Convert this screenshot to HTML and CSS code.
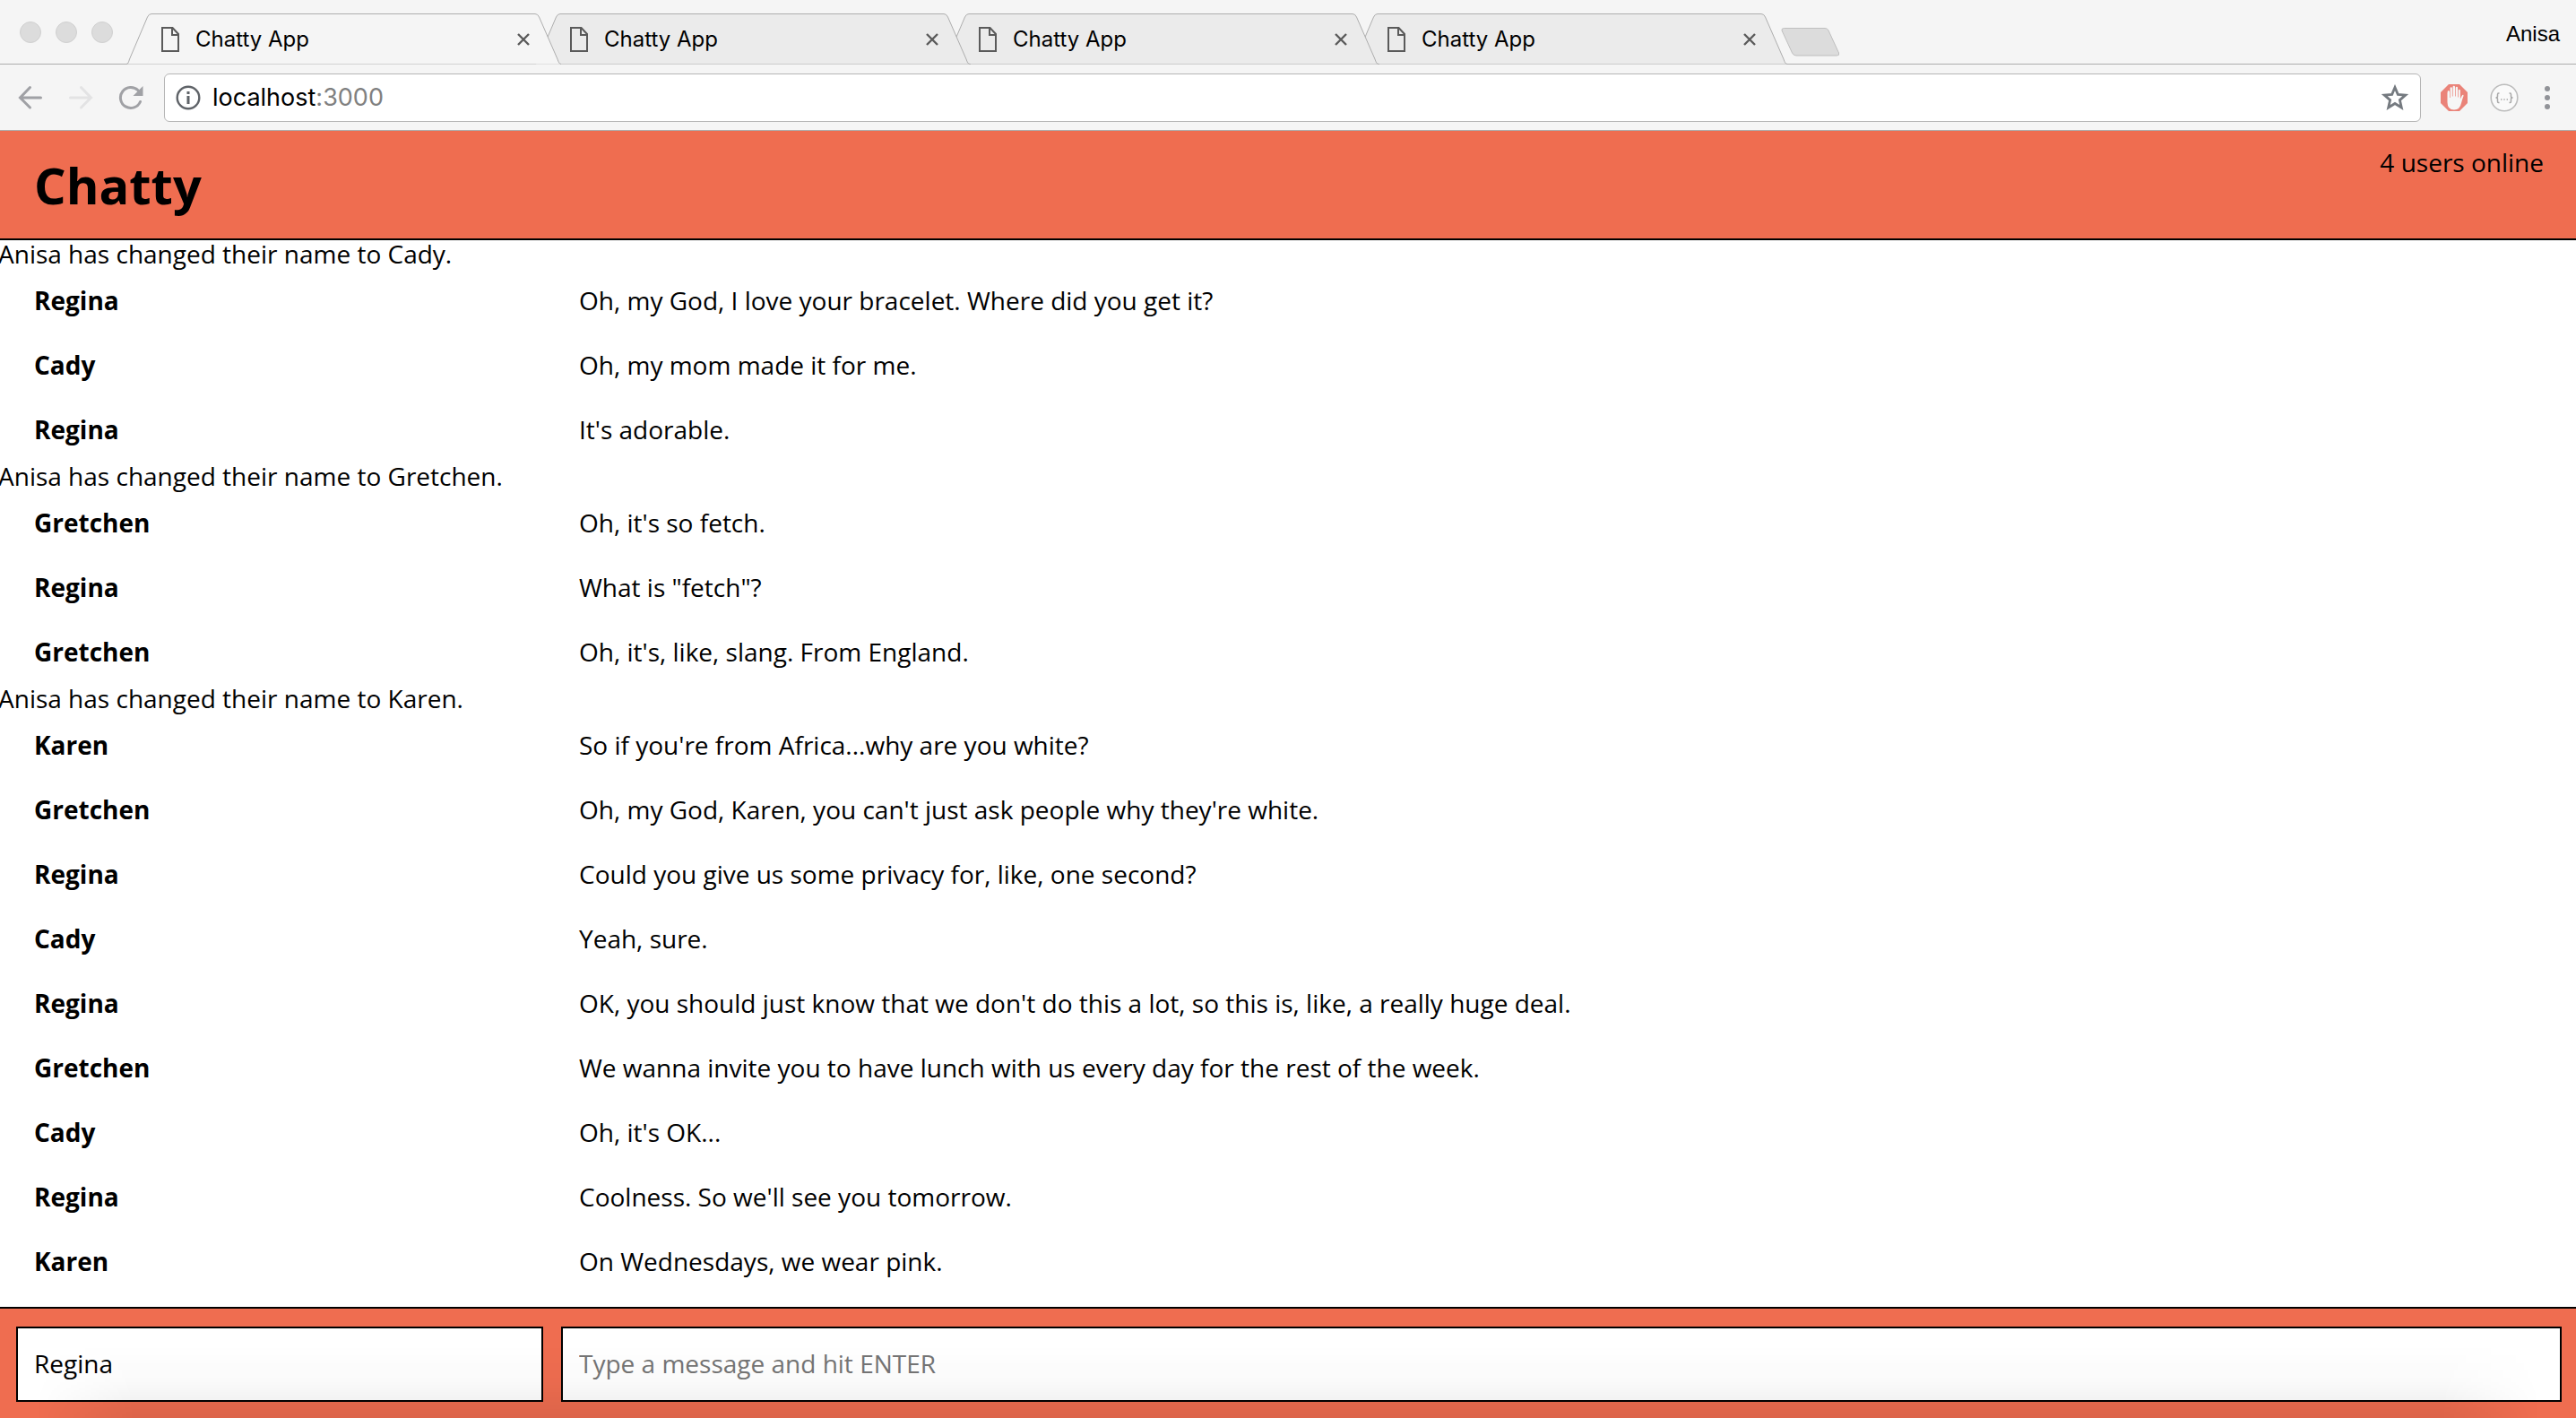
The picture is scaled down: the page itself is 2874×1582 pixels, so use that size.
FILE: index.html
```html
<!DOCTYPE html>
<html lang="en">
<head>
<meta charset="utf-8">
<title>Chatty App</title>
<link rel="stylesheet" href="styles.css">
</head>
<body>
<svg class="defs" aria-hidden="true">
  <symbol id="page" viewBox="0 0 20 28"><path d="M1 1H12.500L19 8V27H1Z M12 1V9H19" fill="none" stroke="#5a5a5a" stroke-width="2"/></symbol>
  <symbol id="close" viewBox="0 0 14 14"><path d="M1 1L13 13M13 1L1 13" fill="none" stroke="#5a5a5a" stroke-width="2.400"/></symbol>
  <symbol id="tab" viewBox="0 0 486 57"><path d="M0 56.500C2 56.500 2.500 54 3.500 51L23.500 4Q25 .5 28 .5H456Q459 .5 460.500 4L481 51C482 54 483 56.500 485 56.500" stroke="#adadad"/></symbol>
</svg>

<div class="browser">
  <div class="tab-strip">
    <div class="window-controls">
      <button class="dot" aria-label="Close window"></button>
      <button class="dot" aria-label="Minimize window"></button>
      <button class="dot" aria-label="Zoom window"></button>
    </div>
    <div class="tabs">
      <div class="tab tab-active"><svg class="tab-shape"><use href="#tab"/></svg><svg class="tab-icon"><use href="#page"/></svg><span class="tab-title">Chatty App</span><button class="tab-close" aria-label="Close tab"><svg><use href="#close"/></svg></button></div>
      <div class="tab"><svg class="tab-shape"><use href="#tab"/></svg><svg class="tab-icon"><use href="#page"/></svg><span class="tab-title">Chatty App</span><button class="tab-close" aria-label="Close tab"><svg><use href="#close"/></svg></button></div>
      <div class="tab"><svg class="tab-shape"><use href="#tab"/></svg><svg class="tab-icon"><use href="#page"/></svg><span class="tab-title">Chatty App</span><button class="tab-close" aria-label="Close tab"><svg><use href="#close"/></svg></button></div>
      <div class="tab"><svg class="tab-shape"><use href="#tab"/></svg><svg class="tab-icon"><use href="#page"/></svg><span class="tab-title">Chatty App</span><button class="tab-close" aria-label="Close tab"><svg><use href="#close"/></svg></button></div>
    </div>
    <button class="new-tab" aria-label="New tab"><svg width="66" height="32" viewBox="0 0 66 32"><path d="M3.500 .5H49Q52 .5 53 3L64.500 28Q65.500 31 62.500 31H17Q14 31 12.500 28L1 3Q.5 .5 3.500 .5Z" fill="#dcdcdc" stroke="#bfbfbf"/></svg></button>
    <span class="profile">Anisa</span>
  </div>

  <div class="toolbar">
    <div class="nav">
      <button aria-label="Back"><svg width="28" height="28" viewBox="0 0 28 28"><path d="M25.500 14H3M13.500 2.500L2.500 14L13.500 25" fill="none" stroke="#a0a1a5" stroke-width="3" stroke-linecap="round"/></svg></button>
      <button aria-label="Forward"><svg width="28" height="28" viewBox="0 0 28 28"><path d="M2.500 14H25M14.500 2.500L25.500 14L14.500 25" fill="none" stroke="#e3e3e4" stroke-width="3" stroke-linecap="round"/></svg></button>
      <button aria-label="Reload"><svg width="28" height="28" viewBox="0 0 28 28"><path d="M24.500 18.500A11.500 11.500 0 1 1 22 5.800" fill="none" stroke="#a0a1a5" stroke-width="3" stroke-linecap="round"/><path d="M27.500 1V12H16.500Z" fill="#a0a1a5"/></svg></button>
    </div>
    <div class="omnibox">
      <svg width="28" height="28" viewBox="0 0 28 28"><circle cx="14" cy="14" r="12.300" fill="none" stroke="#5f6368" stroke-width="2.400"/><path d="M12.500 7H15.500V10H12.500ZM12.500 12H15.500V21H12.500Z" fill="#5f6368"/></svg>
      <div class="url" role="textbox" contenteditable="true" spellcheck="false" aria-label="Address">localhost<span class="port">:3000</span></div>
      <button aria-label="Bookmark"><svg width="32" height="30" viewBox="0 0 32 30"><path d="M16 3.500L19.300 11.300L27.800 12L21.400 17.600L23.300 26L16 21.500L8.700 26L10.600 17.600L4.200 12L12.700 11.300Z" fill="none" stroke="#757a80" stroke-width="2.800"/></svg></button>
    </div>
    <div class="extensions">
      <button aria-label="Ad blocker"><svg width="32" height="32" viewBox="0 0 32 32"><path d="M10 1H22L31 10V22L22 31H10L1 22V10Z" fill="#ea8379"/><path d="M8.500 11Q8.500 8 9.700 8T11 9.500V16H11.600V5.500Q11.600 4.200 12.700 4.200T13.900 5.500V14.500H14.600V4Q14.600 2.800 15.800 2.800T17 4V14.500H17.700V5Q17.700 3.800 18.900 3.800T20 5V15.500H20.700V8Q20.700 6.800 21.700 6.800T22.900 8V17.500Q24 14.500 25.200 13Q26.700 12 26.500 14Q25 18 24 22Q22.500 29.500 16 29.500Q8.500 29.500 8.500 21Z" fill="#f6f6f6"/></svg></button>
      <button aria-label="JSON viewer"><svg width="32" height="32" viewBox="0 0 32 32"><circle cx="16" cy="16" r="14.800" fill="#fafafa" stroke="#bcbcbc" stroke-width="1.600"/><path d="M10.500 11H9.500Q8.500 11 8.500 12.500V14.500Q8.500 16 6.500 16Q8.500 16 8.500 17.500V20Q8.500 21.500 9.500 21.500H10.500M21.500 11H22.500Q23.500 11 23.500 12.500V14.500Q23.500 16 25.500 16Q23.500 16 23.500 17.500V20Q23.500 21.500 22.500 21.500H21.500" fill="none" stroke="#a8a8a8" stroke-width="1.500"/><path d="M12 17.300H13.400V18.700H12ZM15.300 17.300H16.700V18.700H15.300ZM18.600 17.300H20V18.700H18.600Z" fill="#a8a8a8"/></svg></button>
      <button aria-label="Menu"><svg width="32" height="32" viewBox="0 0 32 32"><g fill="#919398"><circle cx="16" cy="6" r="3"/><circle cx="16" cy="16" r="3"/><circle cx="16" cy="26" r="3"/></g></svg></button>
    </div>
  </div>
</div>

<header class="navbar">
  <h1>Chatty</h1>
  <p>4 users online</p>
</header>

<main class="messages">
  <p class="notice">Anisa has changed their name to Cady.</p>
  <div class="message"><b>Regina</b><span>Oh, my God, I love your bracelet. Where did you get it?</span></div>
  <div class="message"><b>Cady</b><span>Oh, my mom made it for me.</span></div>
  <div class="message"><b>Regina</b><span>It's adorable.</span></div>
  <p class="notice">Anisa has changed their name to Gretchen.</p>
  <div class="message"><b>Gretchen</b><span>Oh, it's so fetch.</span></div>
  <div class="message"><b>Regina</b><span>What is "fetch"?</span></div>
  <div class="message"><b>Gretchen</b><span>Oh, it's, like, slang. From England.</span></div>
  <p class="notice">Anisa has changed their name to Karen.</p>
  <div class="message"><b>Karen</b><span>So if you're from Africa...why are you white?</span></div>
  <div class="message"><b>Gretchen</b><span>Oh, my God, Karen, you can't just ask people why they're white.</span></div>
  <div class="message"><b>Regina</b><span>Could you give us some privacy for, like, one second?</span></div>
  <div class="message"><b>Cady</b><span>Yeah, sure.</span></div>
  <div class="message"><b>Regina</b><span>OK, you should just know that we don't do this a lot, so this is, like, a really huge deal.</span></div>
  <div class="message"><b>Gretchen</b><span>We wanna invite you to have lunch with us every day for the rest of the week.</span></div>
  <div class="message"><b>Cady</b><span>Oh, it's OK...</span></div>
  <div class="message"><b>Regina</b><span>Coolness. So we'll see you tomorrow.</span></div>
  <div class="message"><b>Karen</b><span>On Wednesdays, we wear pink.</span></div>
</main>

<footer class="chatbar">
  <input type="text" value="Regina" aria-label="Your name">
  <input type="text" placeholder="Type a message and hit ENTER" aria-label="Message">
</footer>
</body>
</html>
```

FILE: styles.css
```css
* {
  box-sizing: border-box;
}

body {
  display: flex;
  flex-direction: column;
  height: 100vh;
  margin: 0;
  overflow: hidden;
  background: #fff;
  color: #000;
  font-family: "Open Sans", sans-serif;
  font-size: 28px;
  line-height: 32px;
}

h1,
p {
  margin: 0;
}

button {
  display: flex;
  padding: 0;
  border: 0;
  background: none;
}

.defs {
  position: absolute;
  width: 0;
  height: 0;
}

/* Browser window */
.browser {
  flex: none;
  border-bottom: 1px solid #adadad;
  background: #f5f5f5;
  font-family: Inter, sans-serif;
}

.tab-strip {
  display: flex;
  height: 72px;
  padding: 0 18px 0 22px;
  box-shadow: inset 0 -1px #adadad;
}

.window-controls {
  display: flex;
  gap: 16px;
  margin-right: 15px;
  padding-top: 24px;
}

.dot {
  width: 24px;
  height: 24px;
  border: 1px solid #d0d0d0;
  border-radius: 50%;
  background: #dcdcdc;
}

.tabs {
  display: flex;
  align-items: flex-end;
  isolation: isolate;
}

.tab {
  position: relative;
  display: flex;
  align-items: center;
  width: 486px;
  height: 57px;
  margin-right: -30px;
  padding: 0 36px 0 39px;
}

.tab:nth-child(1) { z-index: 4; }
.tab:nth-child(2) { z-index: 3; }
.tab:nth-child(3) { z-index: 2; }
.tab:nth-child(4) { z-index: 1; }

.tab-shape {
  position: absolute;
  inset: 0;
  z-index: -1;
  width: 100%;
  height: 100%;
  fill: #ebebeb;
}

.tab:not(.tab-active) {
  box-shadow: inset 0 -1px #adadad;
}

.tab-active .tab-shape {
  fill: #f5f5f5;
}

.tab-icon {
  width: 20px;
  height: 28px;
}

.tab-title {
  flex: 1;
  margin-left: 18px;
  font-size: 24px;
}

.tab-close svg {
  width: 14px;
  height: 14px;
}

.new-tab {
  margin: 31px 0 0 22px;
  align-self: flex-start;
}

.profile {
  margin: 22px 0 0 auto;
  font-family: "Liberation Sans", sans-serif;
  font-size: 24px;
}

.toolbar {
  display: flex;
  align-items: center;
  height: 73px;
  padding: 0 16px 0 20px;
}

.nav {
  display: flex;
  gap: 28px;
  margin-right: 23px;
}

.omnibox {
  display: flex;
  flex: 1;
  align-items: center;
  height: 54px;
  padding: 0 12px;
  border: 1px solid #b5b5b5;
  border-radius: 6px;
  background: #fff;
}

.url {
  flex: 1;
  margin-left: 13px;
  font-size: 27px;
}

.port {
  color: #808080;
}

.extensions {
  display: flex;
  gap: 24px;
  margin-left: 21px;
}

.extensions button:last-child {
  margin-left: -8px;
}

/* Chat application */
.navbar {
  display: flex;
  flex: none;
  justify-content: space-between;
  height: 122px;
  padding: 19px 36px 0 38px;
  border-bottom: 2px solid #000;
  background: #ef6d50;
}

.navbar h1 {
  font-size: 56px;
  line-height: 82px;
}

.messages {
  display: flex;
  flex: 1;
  flex-direction: column;
  justify-content: flex-end;
  min-height: 0;
  padding-bottom: 15px;
  overflow: hidden;
}

.notice {
  margin-left: -2px;
}

.message {
  display: grid;
  grid-template-columns: 608px 1fr;
  padding: 20px 38px;
}

.chatbar {
  position: relative;
  display: grid;
  flex: none;
  grid-template-columns: 588px 1fr;
  gap: 20px;
  padding: 20px 16px 18px 18px;
  border-top: 2px solid #000;
  background: #ef6d50;
}

.chatbar::after {
  position: absolute;
  inset: 40px 0 0;
  background: linear-gradient(transparent, rgba(0, 0, 0, 0.02) 50%, rgba(0, 0, 0, 0.08));
  mask-image: linear-gradient(to right, transparent 40px, #000 150px, #000 calc(100% - 150px), transparent calc(100% - 40px));
  content: "";
  pointer-events: none;
}

.chatbar input {
  min-width: 0;
  height: 84px;
  padding: 0 18px 2px;
  border: 2px solid #000;
  border-radius: 0;
  background: #fff;
  color: #000;
  font: inherit;
}

.chatbar input::placeholder {
  color: #757575;
}
```
